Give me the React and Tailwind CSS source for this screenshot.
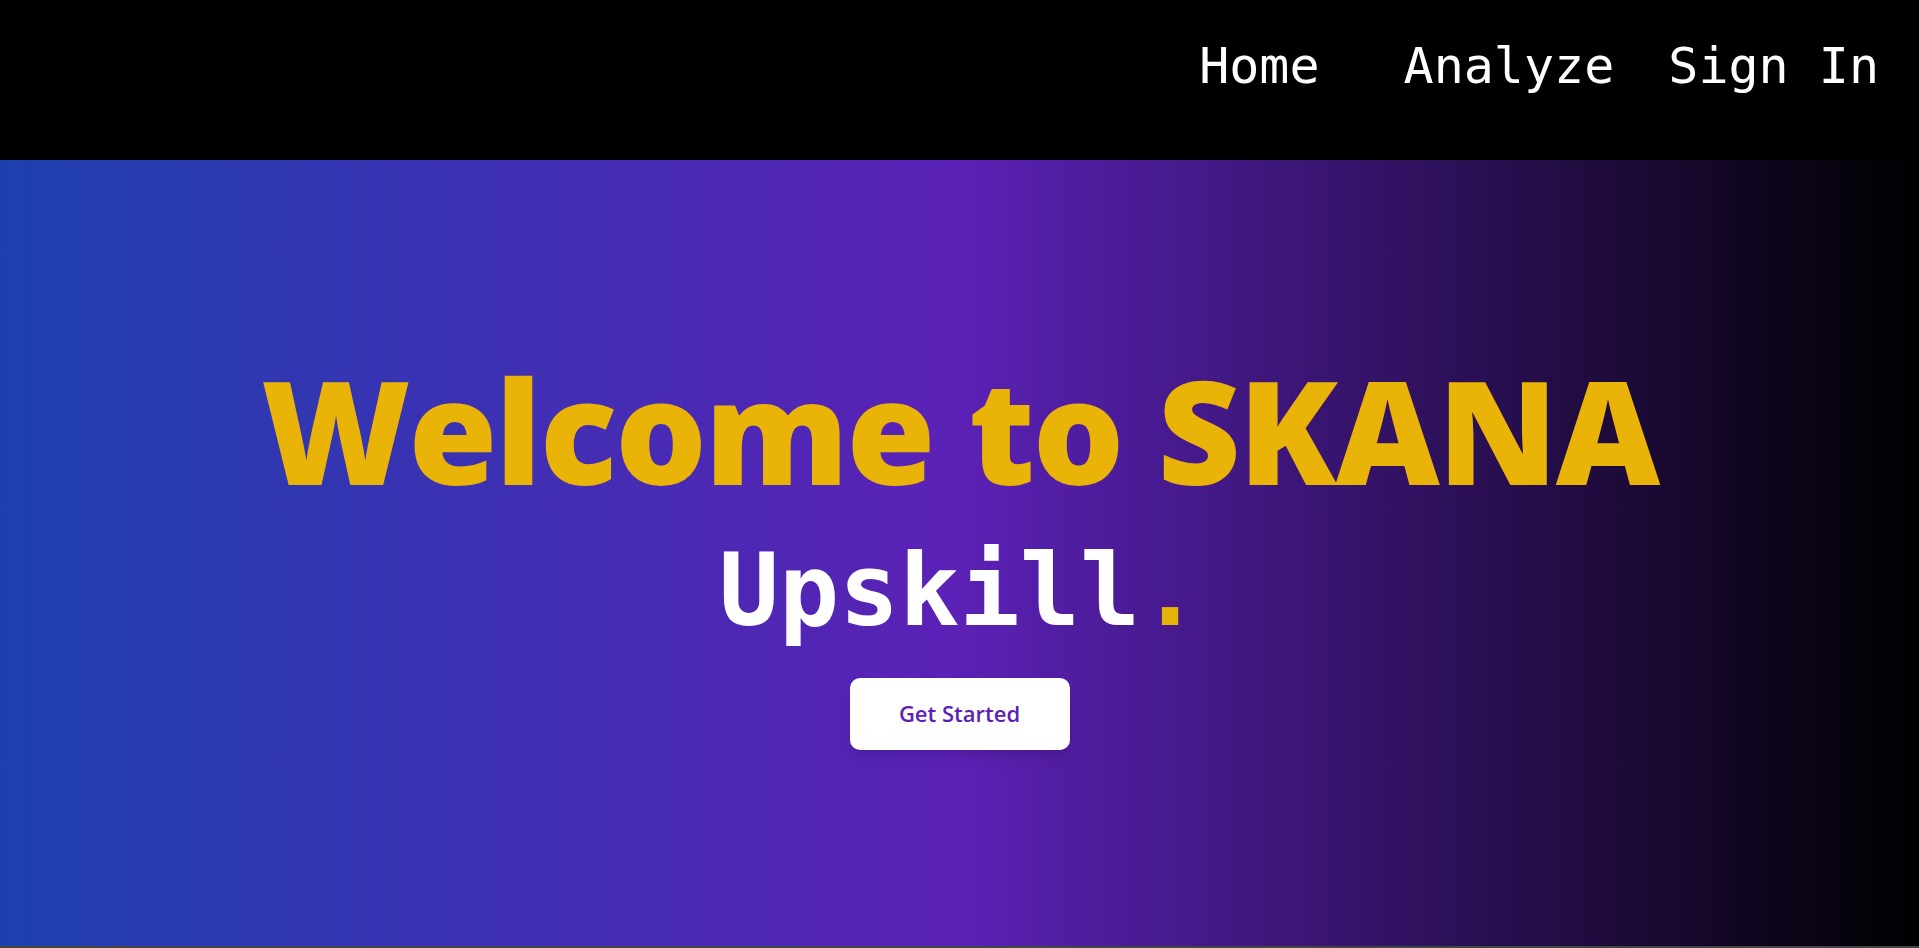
export default function App() {
  const mono = { fontFamily: '"DejaVu Sans Mono", monospace' };
  return (
    <div className="w-full min-h-screen bg-[#444444]">
      <nav className="h-[160px] bg-black flex justify-end items-start pt-[29px] pr-[40px]" style={mono}>
        <a className="text-white text-[50px] leading-normal mr-[84px]" href="#">Home</a>
        <a className="text-white text-[50px] leading-normal mr-[54px]" href="#">Analyze</a>
        <a className="text-white text-[50px] leading-normal" href="#">Sign In</a>
      </nav>
      <section className="h-[786px] bg-[linear-gradient(to_right,#1e40af,#5b21b6,#000000)] flex flex-col items-center justify-center">
        <h1
          className="text-[144px] leading-none font-extrabold text-[#eab308] tracking-[-0.015em] whitespace-nowrap"
          style={{ fontFamily: '"Open Sans", sans-serif' }}
        >
          Welcome to SKANA
        </h1>
        <div className="mt-[40px] text-[100px] leading-none font-bold text-white" style={mono}>
          Upskill<span className="text-[#eab308]">.</span>
        </div>
        <button
          className="mt-[37px] w-[220px] h-[72px] rounded-[10px] bg-white text-[#5b21b6] text-[22px] font-semibold shadow-lg"
          style={{ fontFamily: '"Open Sans", sans-serif' }}
        >
          Get Started
        </button>
      </section>
    </div>
  );
}
